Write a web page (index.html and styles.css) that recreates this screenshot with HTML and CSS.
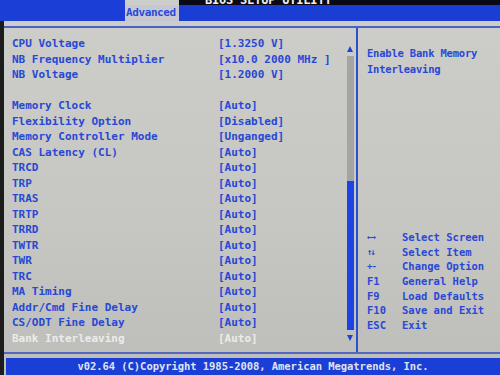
FILE: index.html
```html
<!DOCTYPE html>
<html>
<head>
<meta charset="utf-8">
<link rel="stylesheet" href="styles.css">
</head>
<body>
<div class="screen">
  <div class="topbar">
    <div class="bar-left"></div>
    <div class="tab">Advanced</div>
    <div class="bar-right">
      <div class="title"><span>BIOS SETUP UTILITY</span></div>
    </div>
  </div>
  <div class="rule-top"></div>
  <div class="main">
    <div class="left">
      <div class="list">
        <div class="row"><span class="label">CPU Voltage</span><span class="value">[1.3250 V]</span></div>
        <div class="row"><span class="label">NB Frequency Multiplier</span><span class="value">[x10.0 2000 MHz ]</span></div>
        <div class="row"><span class="label">NB Voltage</span><span class="value">[1.2000 V]</span></div>
        <div class="row blank"></div>
        <div class="row"><span class="label">Memory Clock</span><span class="value">[Auto]</span></div>
        <div class="row"><span class="label">Flexibility Option</span><span class="value">[Disabled]</span></div>
        <div class="row"><span class="label">Memory Controller Mode</span><span class="value">[Unganged]</span></div>
        <div class="row"><span class="label">CAS Latency (CL)</span><span class="value">[Auto]</span></div>
        <div class="row"><span class="label">TRCD</span><span class="value">[Auto]</span></div>
        <div class="row"><span class="label">TRP</span><span class="value">[Auto]</span></div>
        <div class="row"><span class="label">TRAS</span><span class="value">[Auto]</span></div>
        <div class="row"><span class="label">TRTP</span><span class="value">[Auto]</span></div>
        <div class="row"><span class="label">TRRD</span><span class="value">[Auto]</span></div>
        <div class="row"><span class="label">TWTR</span><span class="value">[Auto]</span></div>
        <div class="row"><span class="label">TWR</span><span class="value">[Auto]</span></div>
        <div class="row"><span class="label">TRC</span><span class="value">[Auto]</span></div>
        <div class="row"><span class="label">MA Timing</span><span class="value">[Auto]</span></div>
        <div class="row"><span class="label">Addr/Cmd Fine Delay</span><span class="value">[Auto]</span></div>
        <div class="row"><span class="label">CS/ODT Fine Delay</span><span class="value">[Auto]</span></div>
        <div class="row selected"><span class="label">Bank Interleaving</span><span class="value">[Auto]</span></div>
      </div>
      <div class="scroll">
        <div class="arrow-up"></div>
        <div class="track"></div>
        <div class="thumb"></div>
        <div class="arrow-down"></div>
      </div>
    </div>
    <div class="divider"></div>
    <div class="right">
      <div class="help">Enable Bank Memory<br>Interleaving</div>
      <div class="keys">
        <div class="key"><span class="k sym">←→</span><span class="d">Select Screen</span></div>
        <div class="key"><span class="k sym">↑↓</span><span class="d">Select Item</span></div>
        <div class="key"><span class="k pm">+-</span><span class="d">Change Option</span></div>
        <div class="key"><span class="k">F1</span><span class="d">General Help</span></div>
        <div class="key"><span class="k">F9</span><span class="d">Load Defaults</span></div>
        <div class="key"><span class="k">F10</span><span class="d">Save and Exit</span></div>
        <div class="key"><span class="k">ESC</span><span class="d">Exit</span></div>
      </div>
    </div>
  </div>
  <div class="rule-bottom"></div>
  <div class="footer">v02.64 (C)Copyright 1985-2008, American Megatrends, Inc.</div>
</div>
</body>
</html>
```
FILE: styles.css
```css
html, body {
  margin: 0;
  padding: 0;
}
body {
  width: 500px;
  height: 375px;
  overflow: hidden;
  background: #1c1c1c;
  font-family: "DejaVu Sans Mono", "Liberation Mono", monospace;
}
.screen {
  width: 500px;
  height: 375px;
  display: flex;
  flex-direction: column;
  background: linear-gradient(180deg, #cdcdc9 0%, #c6c6c2 60%, #bdbdb9 100%);
  border-left: 4px solid #1c1c1c;
  box-sizing: border-box;
}
.topbar {
  display: flex;
  height: 21px;
  margin-left: -4px;
}
.bar-left {
  width: 125px;
  background: #1b3fd6;
}
.tab {
  width: 54px;
  margin-top: 5px;
  background: #c4c8d4;
  color: #2a48d8;
  font-size: 11px;
  font-weight: bold;
  line-height: 16px;
  padding-left: 1px;
  box-sizing: border-box;
  letter-spacing: -0.4px;
}
.bar-right {
  flex: 1;
  background: #1a3ed4;
  display: flex;
  flex-direction: column;
}
.title {
  height: 5px;
  background: #0a0a14;
  overflow: hidden;
  padding-left: 26px;
}
.title span {
  display: block;
  margin-top: -6px;
  color: #f0f0f0;
  font-size: 12px;
  font-weight: bold;
  line-height: 12px;
  letter-spacing: -0.2px;
}
.rule-top {
  height: 2px;
  margin-top: 5px;
  background: #4a62c4;
}
.main {
  flex: 1;
  display: flex;
}
.left {
  width: 350px;
  display: flex;
}
.list {
  width: 332px;
  padding-left: 8px;
  padding-top: 8px;
  box-sizing: border-box;
}
.row {
  display: flex;
  height: 15.5px;
  line-height: 15.5px;
  font-size: 11px;
  font-weight: bold;
  color: #2748d6;
  white-space: pre;
}
.label {
  width: 206px;
}
.selected {
  color: #ececea;
}
.scroll {
  width: 8px;
  margin-left: 10px;
  display: flex;
  flex-direction: column;
  align-items: center;
  padding-top: 18px;
}
.arrow-up {
  width: 0;
  height: 0;
  border-left: 3.5px solid transparent;
  border-right: 3.5px solid transparent;
  border-bottom: 6px solid #2040d8;
}
.track {
  width: 7px;
  height: 125px;
  margin-top: 4px;
  background: #a4a4a2;
}
.thumb {
  width: 7px;
  height: 149px;
  background: #1c44e4;
}
.arrow-down {
  width: 0;
  height: 0;
  margin-top: 5px;
  border-left: 3.5px solid transparent;
  border-right: 3.5px solid transparent;
  border-top: 6px solid #2040d8;
}
.divider {
  width: 2px;
  margin-left: 2px;
  background: #2c4ed0;
}
.right {
  flex: 1;
  display: flex;
  flex-direction: column;
  padding-left: 9px;
  padding-top: 17px;
  color: #2a48d6;
  font-size: 10.5px;
  font-weight: bold;
}
.help {
  line-height: 16px;
  letter-spacing: -0.2px;
}
.keys {
  margin-top: 153px;
}
.key {
  display: flex;
  height: 14.7px;
  line-height: 14.7px;
}
.k {
  width: 35px;
}
.sym {
  font-size: 9px;
  letter-spacing: -2px;
}
.pm {
  font-size: 9px;
  letter-spacing: -1px;
}
.d {
  white-space: pre;
}
.rule-bottom {
  height: 2px;
  margin-bottom: 4px;
  background: #5468c0;
}
.footer {
  height: 17px;
  line-height: 17px;
  background: #1a3ed6;
  color: #dfe4f2;
  font-size: 10.5px;
  font-weight: bold;
  text-align: center;
  white-space: pre;
  margin-left: 2px;
  letter-spacing: -0.05px;
}
```
